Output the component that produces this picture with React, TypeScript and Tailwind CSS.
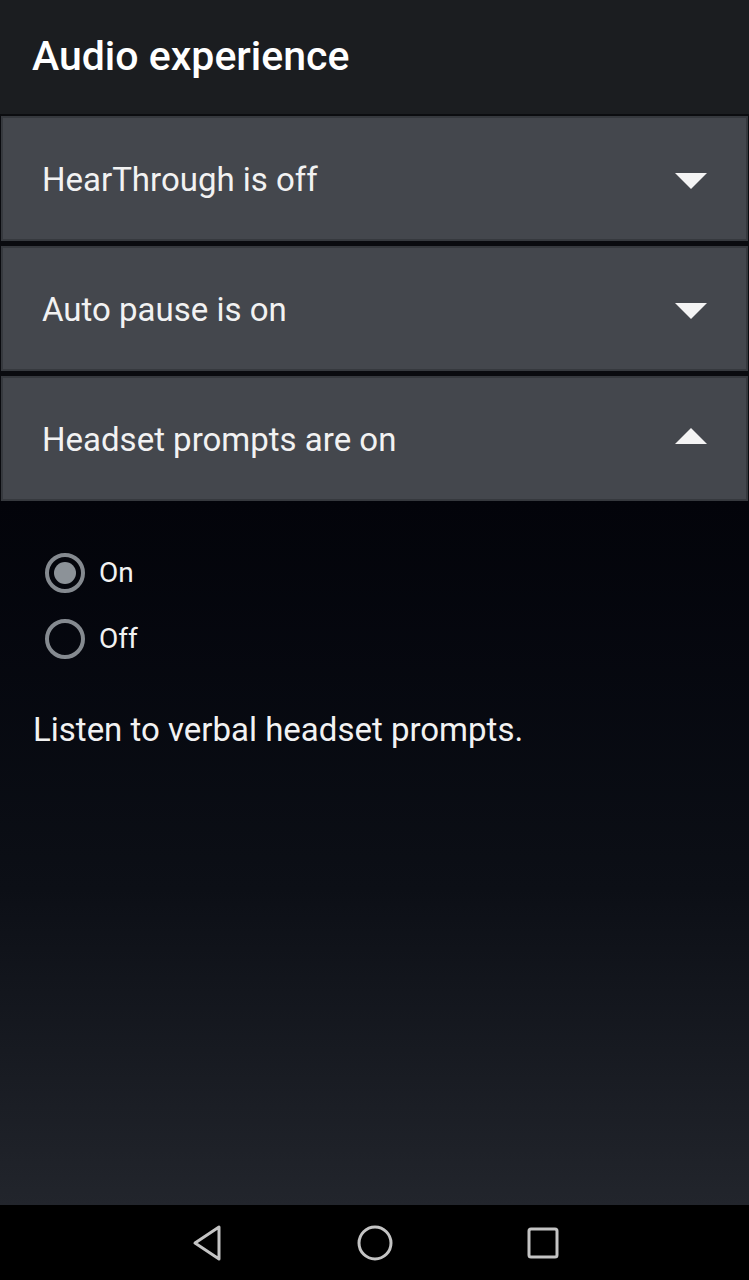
const font = { fontFamily: 'Roboto, "Noto Sans", sans-serif' }

function Caret({ up }: { up?: boolean }) {
  return (
    <svg width="34" height="18" viewBox="0 0 34 18" className={up ? 'shrink-0 -mt-[5px]' : 'shrink-0 mt-[5px]'}>
      {up ? <path d="M1 17 L17 1 L33 17 Z" fill="#f4f4f4" /> : <path d="M1 1 L33 1 L17 17 Z" fill="#f4f4f4" />}
    </svg>
  )
}

function Section({ label, open }: { label: string; open?: boolean }) {
  return (
    <div className="mx-px h-[125px] bg-[#44474d] border-2 border-[#36393e] flex items-center justify-between pl-[39px] pr-[38px]">
      <span className="text-[33px] text-[#f2f2f2] pt-[3px]">{label}</span>
      <Caret up={open} />
    </div>
  )
}

function Radio({ label, checked }: { label: string; checked?: boolean }) {
  return (
    <div className="flex items-center h-[66px] gap-[14px]">
      <div className="w-[40px] h-[40px] rounded-full border-[4px] border-[#858a90] flex items-center justify-center">
        {checked && <div className="w-[22px] h-[22px] rounded-full bg-[#8c9298]" />}
      </div>
      <span className="text-[28px] text-[#f2f2f2]">{label}</span>
    </div>
  )
}

export default function App() {
  return (
    <div style={font} className="w-[749px] h-[1280px] flex flex-col bg-[#07080c] overflow-hidden">
      <div className="h-[116px] bg-[#1b1d20] flex items-center px-[32px] border-b-2 border-[#0c0d10] shrink-0">
        <h1 className="text-[41px] font-medium text-white">Audio experience</h1>
      </div>
      <div className="flex flex-col gap-[5px] bg-[#0a0b0f] shrink-0">
        <Section label="HearThrough is off" />
        <Section label="Auto pause is on" />
        <Section label="Headset prompts are on" open />
      </div>
      <div className="flex-1 bg-gradient-to-b from-[#03040a] via-[#0c0f16] via-55% to-[#22252c] px-[45px] pt-[39px]">
        <Radio label="On" checked />
        <Radio label="Off" />
        <p className="-ml-[12px] mt-[33px] text-[33px] text-[#f2f2f2]">Listen to verbal headset prompts.</p>
      </div>
      <div className="h-[75px] bg-black flex items-center justify-center gap-[128px] shrink-0">
        <div className="w-[40px] flex justify-center">
          <svg width="32" height="38" viewBox="0 0 32 38">
            <path d="M28 3 L28 35 L4 19 Z" fill="none" stroke="#c4c4c4" strokeWidth="3" strokeLinejoin="round" />
          </svg>
        </div>
        <div className="w-[40px] flex justify-center">
          <svg width="38" height="38" viewBox="0 0 38 38">
            <circle cx="19" cy="19" r="16" fill="none" stroke="#c4c4c4" strokeWidth="3" />
          </svg>
        </div>
        <div className="w-[40px] flex justify-center">
          <svg width="32" height="32" viewBox="0 0 32 32">
            <rect x="2" y="2" width="28" height="28" rx="2" fill="none" stroke="#c4c4c4" strokeWidth="3" />
          </svg>
        </div>
      </div>
    </div>
  )
}
